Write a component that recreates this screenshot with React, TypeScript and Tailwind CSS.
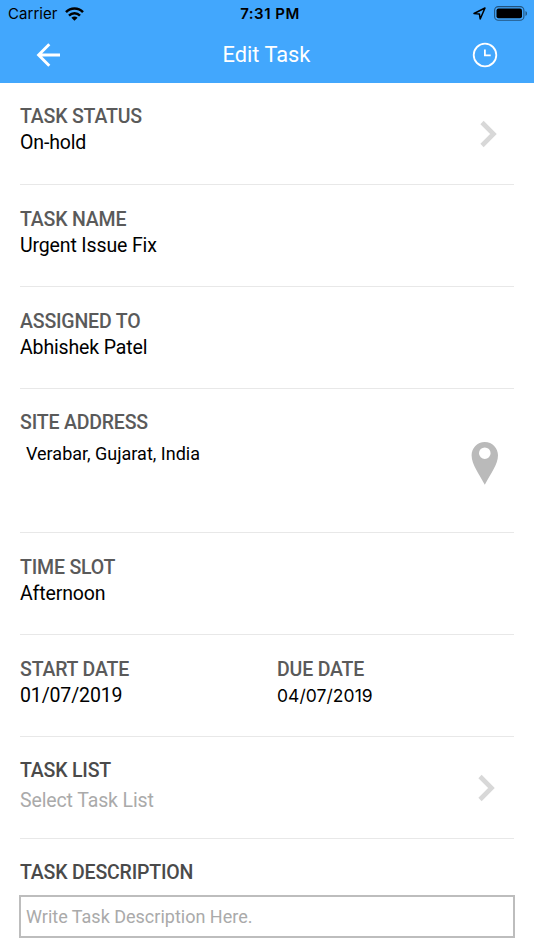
import React from 'react';

interface FieldProps {
  label: string;
  labelClass?: string;
  className?: string;
  icon?: React.ReactNode;
  children: React.ReactNode;
}

function Label({ className = 'text-[#5a5a5a]', children }: { className?: string; children: React.ReactNode }) {
  return <h2 className={`text-[19.5px] leading-[26px] font-medium tracking-[-0.18px] ${className}`}>{children}</h2>;
}

function Field({ label, labelClass, className = 'h-[102px] pt-[21px]', icon, children }: FieldProps) {
  return (
    <div className={`mx-5 flex justify-between border-b border-[#e8e8e8] ${className}`}>
      <div>
        <Label className={labelClass}>{label}</Label>
        {children}
      </div>
      {icon}
    </div>
  );
}

function Value({ children }: { children: React.ReactNode }) {
  return <p className="text-[19.5px] leading-[26px] tracking-[-0.14px]">{children}</p>;
}

function Chevron({ className }: { className: string }) {
  return (
    <svg className={className} width="18" height="28" viewBox="0 0 18 28" fill="none" stroke="#d8d8d8" strokeWidth="4.6">
      <path d="M2 2.5 13.5 14 2 25.5" />
    </svg>
  );
}

function StatusBar() {
  return (
    <div className="grid h-7 grid-cols-3 items-center pl-2 pr-[6px] font-['Inter',sans-serif] text-[15px] leading-7 text-black">
      <div className="flex items-center gap-[7px]">
        <span className="tracking-[0.05px]">Carrier</span>
        <svg className="-mt-px" width="19" height="14" viewBox="0 0 19 14" fill="none" stroke="#000" strokeWidth="2.5">
          <path d="M1 5.2C5.8.3 13.2.3 18 5.2" />
          <path d="M4 8.6c3.1-3.1 7.9-3.1 11 0" />
          <path d="M6.4 10.7c1.8-1.7 4.4-1.7 6.2 0L9.5 13.8Z" fill="#000" stroke="none" />
        </svg>
      </div>
      <span className="pl-1 text-center font-semibold tracking-[0.5px]">7:31 PM</span>
      <div className="flex items-center justify-end gap-2">
        <svg className="-mt-px" width="13" height="13" viewBox="0 0 13 13" fill="none" stroke="#000" strokeWidth="1.5" strokeLinejoin="round">
          <path d="M1 6.5 12 1 7.2 12 6.4 6.9Z" />
        </svg>
        <svg className="-mt-px" width="34" height="15" viewBox="0 0 34 15" fill="none">
          <rect x=".6" y=".6" width="29.3" height="13.6" rx="3.8" stroke="#000" strokeOpacity=".5" strokeWidth="1.1" />
          <rect x="2.5" y="2.5" width="25.5" height="9.8" rx="2" fill="#000" />
          <path d="M31.5 5v5c2-.7 2-4.3 0-5Z" fill="#000" fillOpacity=".5" />
        </svg>
      </div>
    </div>
  );
}

function NavBar() {
  return (
    <div className="flex h-[53px] items-center justify-between px-9 text-white">
      <svg width="25" height="24" viewBox="0 0 25 24" fill="none" stroke="currentColor" strokeWidth="2.9">
        <path d="M13.3 1.3 2.6 12l10.7 10.7M2 12h22" />
      </svg>
      <h1 className="pt-0.5 text-[21.8px]">Edit Task</h1>
      <svg width="26" height="26" viewBox="0 0 26 26" fill="none" stroke="currentColor" strokeWidth="1.8">
        <circle cx="13" cy="13" r="11.3" />
        <path d="M12.9 7.4v6h5.8" />
      </svg>
    </div>
  );
}

export default function App() {
  return (
    <div className="h-[950px] w-[534px] overflow-hidden bg-white font-['Roboto',sans-serif] text-black">
      <header className="h-[83px] bg-[#42a7fd]">
        <StatusBar />
        <NavBar />
      </header>
      <main>
        <Field label="TASK STATUS" icon={<Chevron className="mr-4 mt-4" />}>
          <Value>On-hold</Value>
        </Field>
        <Field label="TASK NAME" className="h-[102px] pt-[22px]">
          <Value>Urgent Issue Fix</Value>
        </Field>
        <Field label="ASSIGNED TO" className="h-[102px] pt-[22px]">
          <Value>Abhishek Patel</Value>
        </Field>
        <Field
          label="SITE ADDRESS"
          className="h-36 pt-[21px]"
          icon={
            <svg className="mr-4 mt-8" width="27" height="43" viewBox="0 0 27 43">
              <path
                fill="#bababa"
                fillRule="evenodd"
                d="M13.8 0C6.3 0 .6 6 .6 13.3c0 9 7.4 18.7 13.2 29.4C19.6 32 27 22.3 27 13.3 27 6 21.3 0 13.8 0Zm0 5.4a5.8 5.8 0 1 1 0 11.6 5.8 5.8 0 0 1 0-11.6Z"
              />
            </svg>
          }
        >
          <p className="ml-[6px] mt-[5px] text-[18px] leading-[26px]">Verabar, Gujarat, India</p>
        </Field>
        <Field label="TIME SLOT" className="h-[102px] pt-[22px]">
          <Value>Afternoon</Value>
        </Field>
        <div className="mx-5 grid h-[102px] grid-cols-[257px_1fr] border-b border-[#e8e8e8] pt-[22px]">
          <div>
            <Label>START DATE</Label>
            <Value>01/07/2019</Value>
          </div>
          <div>
            <Label>DUE DATE</Label>
            <p className="font-['Inter',sans-serif] text-[17.5px] leading-[26px] tracking-[0.05px]">04/07/2019</p>
          </div>
        </div>
        <Field label="TASK LIST" labelClass="text-[#4a4a4a]" icon={<Chevron className="mr-[18px] mt-4" />}>
          <p className="mt-1 text-[19.5px] leading-[26px] tracking-[-0.12px] text-[#aaa]">Select Task List</p>
        </Field>
        <section className="mx-5 pt-[21px]">
          <Label className="text-[#4a4a4a]">TASK DESCRIPTION</Label>
          <div className="-ml-px mt-[9px] h-[43px] w-[496px] border-2 border-[#bdbdbd] pl-[5px] text-[18px] leading-10 text-[#aaa]">
            Write Task Description Here.
          </div>
        </section>
      </main>
    </div>
  );
}
